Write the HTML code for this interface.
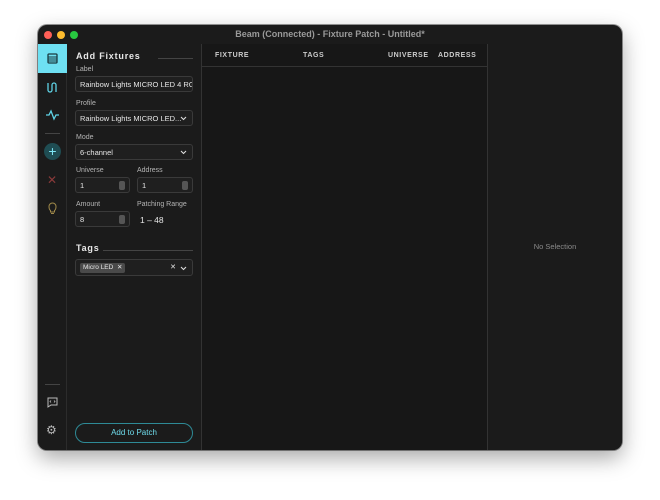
<!DOCTYPE html>
<html><head><meta charset="utf-8"><style>
*{box-sizing:border-box;margin:0;padding:0}
body{width:660px;height:500px;background:#fff;font-family:"Liberation Sans",sans-serif;position:relative;overflow:hidden}
.win{position:absolute;left:38px;top:25px;width:584px;height:425px;background:#1b1b1b;border-radius:9px;overflow:hidden;box-shadow:0 8px 22px rgba(0,0,0,.35),0 0 0 1px rgba(0,0,0,.4)}
.title{position:absolute;left:0;top:0;width:584px;height:19px;text-align:center;color:#9a9a9a;font-size:9px;line-height:19px;font-weight:bold}
.dot{position:absolute;top:6px;width:8px;height:8px;border-radius:50%}
.side{position:absolute;left:0;top:19px;width:29px;height:406px;background:#1b1b1b;border-right:1px solid #2c2c2c}
.panel{position:absolute;left:29px;top:19px;width:135px;height:406px;background:#1b1b1b;border-right:1px solid #333}
.table{position:absolute;left:164px;top:19px;width:286px;height:406px;background:#171717;border-right:1px solid #333}
.right{position:absolute;left:450px;top:19px;width:134px;height:406px;background:#1b1b1b}
.lbl{position:absolute;color:#b5b5b5;font-size:7px}
.inp{position:absolute;background:#1f1f1f;border:1px solid #3a3a3a;border-radius:3px;color:#e6e6e6;font-size:7.5px;line-height:15px;padding-left:4px;height:16px;white-space:nowrap;overflow:hidden}
.h{position:absolute;color:#e8e8e8;font-size:9px;font-weight:bold;letter-spacing:.8px}
.hl{position:absolute;height:1px;background:#444}
.chev{position:absolute;right:5px;top:5px}
.spin{position:absolute;right:4px;top:3px;width:6px;height:9px;background:#555;border-radius:2px}
.th{position:absolute;top:8px;color:#ccc;font-size:7px;font-weight:bold;letter-spacing:.6px}
</style></head><body>
<div class="win">
<div class="title">Beam (Connected) - Fixture Patch - Untitled*</div>
<div class="dot" style="left:6px;background:#fe5f57"></div>
<div class="dot" style="left:19px;background:#febc2e"></div>
<div class="dot" style="left:32px;background:#28c840"></div>
<div class="side">
 <div style="position:absolute;left:0;top:0;width:29px;height:29px;background:#6ee0f2"></div>
 <svg style="position:absolute;left:9px;top:9px" width="11" height="11" viewBox="0 0 11 11"><rect x="1" y="1" width="9" height="9" rx="1" fill="none" stroke="#1a3a40" stroke-width="1.3"/><path d="M1 4h9M1 6h9M1 8h9" stroke="#1a3a40" stroke-width="1"/></svg>
 <svg style="position:absolute;left:8px;top:37px" width="13" height="13" viewBox="0 0 13 13"><path d="M2 2v7a2 2 0 0 0 4 0V4a2 2 0 0 1 4 0v7" fill="none" stroke="#5fd3e6" stroke-width="1.3"/></svg>
 <svg style="position:absolute;left:7px;top:65px" width="15" height="12" viewBox="0 0 15 12"><path d="M1 6h3l2-4 3 8 2-4h3" fill="none" stroke="#5fd3e6" stroke-width="1.3"/></svg>
 <div style="position:absolute;left:7px;top:89px;width:15px;height:1px;background:#444"></div>
 <div style="position:absolute;left:6px;top:99px;width:17px;height:17px;border-radius:50%;background:#1f4d53;color:#7fe6f5;font-size:14px;line-height:16px;text-align:center">+</div>
 <div style="position:absolute;left:9px;top:129px;color:#8a3a3a;font-size:12px">✕</div>
 <svg style="position:absolute;left:10px;top:158px" width="9" height="13" viewBox="0 0 9 13"><path d="M2.5 8.5C1 7.5 1 6 1 4.5a3.5 3.5 0 0 1 7 0c0 1.5 0 3-1.5 4v1.5h-4zM3 11.5h3" fill="none" stroke="#a08a4a" stroke-width="1"/></svg>
 <div style="position:absolute;left:7px;top:340px;width:15px;height:1px;background:#444"></div>
 <svg style="position:absolute;left:9px;top:353px" width="11" height="11" viewBox="0 0 11 11"><path d="M1 1h9v7H4l-3 2z" fill="none" stroke="#bbb" stroke-width="1"/><path d="M4 3.5l-1 1 1 1M7 3.5l1 1-1 1" fill="none" stroke="#bbb" stroke-width=".8"/></svg>
 <div style="position:absolute;left:8px;top:379px;color:#bbb;font-size:12px">⚙</div>
</div>
<div class="panel">
 <div class="h" style="left:9px;top:7px">Add Fixtures</div><div class="hl" style="left:91px;top:14px;width:35px"></div>
 <div class="lbl" style="left:9px;top:22px">Label</div>
 <div class="inp" style="left:8px;top:32px;width:118px">Rainbow Lights MICRO LED 4 RGB</div>
 <div class="lbl" style="left:9px;top:56px">Profile</div>
 <div class="inp" style="left:8px;top:66px;width:118px">Rainbow Lights MICRO LED...<svg class="chev" width="7" height="5" viewBox="0 0 7 5"><path d="M1 1l2.5 2.5L6 1" fill="none" stroke="#ddd" stroke-width="1.1"/></svg></div>
 <div class="lbl" style="left:9px;top:90px">Mode</div>
 <div class="inp" style="left:8px;top:100px;width:118px">6-channel<svg class="chev" width="7" height="5" viewBox="0 0 7 5"><path d="M1 1l2.5 2.5L6 1" fill="none" stroke="#ddd" stroke-width="1.1"/></svg></div>
 <div class="lbl" style="left:9px;top:123px">Universe</div>
 <div class="lbl" style="left:70px;top:123px">Address</div>
 <div class="inp" style="left:8px;top:133px;width:55px">1<span class="spin"></span></div>
 <div class="inp" style="left:70px;top:133px;width:56px">1<span class="spin"></span></div>
 <div class="lbl" style="left:9px;top:157px">Amount</div>
 <div class="lbl" style="left:70px;top:157px">Patching Range</div>
 <div class="inp" style="left:8px;top:167px;width:55px">8<span class="spin"></span></div>
 <div style="position:absolute;left:73px;top:171px;color:#e6e6e6;font-size:8.5px">1 – 48</div>
 <div class="h" style="left:9px;top:199px">Tags</div><div class="hl" style="left:36px;top:206px;width:90px"></div>
 <div class="inp" style="left:8px;top:215px;width:118px;height:17px"><span style="display:inline-block;background:#4a4a4a;border-radius:2px;padding:0 3px;line-height:10px;font-size:6.5px;margin-top:3px;vertical-align:top">Micro LED &nbsp;✕</span><span style="position:absolute;right:16px;top:0;font-size:7px">✕</span><svg class="chev" style="top:6px" width="7" height="5" viewBox="0 0 7 5"><path d="M1 1l2.5 2.5L6 1" fill="none" stroke="#ddd" stroke-width="1.1"/></svg></div>
 <div style="position:absolute;left:8px;top:379px;width:118px;height:20px;border:1.3px solid #2e8a96;border-radius:10px;color:#6fdcec;font-size:8px;line-height:18px;text-align:center">Add to Patch</div>
</div>
<div class="table">
 <div class="th" style="left:13px">FIXTURE</div>
 <div class="th" style="left:101px">TAGS</div>
 <div class="th" style="left:186px">UNIVERSE</div>
 <div class="th" style="left:236px">ADDRESS</div>
 <div style="position:absolute;left:0;top:22px;width:286px;height:1px;background:#333"></div>
</div>
<div class="right"><div style="position:absolute;left:0;width:134px;top:198px;text-align:center;color:#8a8a8a;font-size:7.5px">No Selection</div></div>
</div>
</body></html>
